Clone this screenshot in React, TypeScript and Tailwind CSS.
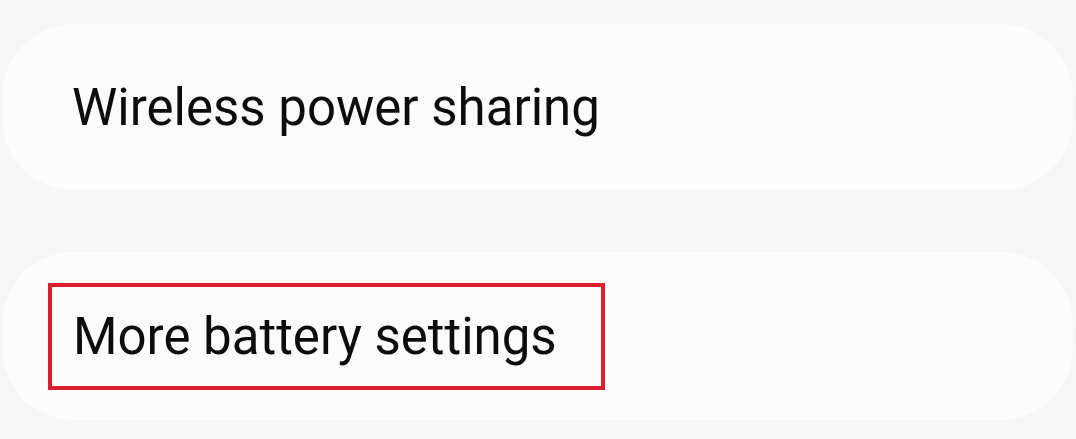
import React from 'react';

export default function App() {
  return (
    <div className="w-[1076px] h-[439px] bg-[#f6f6f6] overflow-hidden flex flex-col pt-[24px] gap-[62px] pl-[2px] pr-[3px]" style={{ fontFamily: 'Roboto, "Noto Sans", sans-serif' }}>
      {/* Wireless power sharing */}
      <div className="h-[166px] bg-[#fcfcfc] rounded-[72px] flex items-center pl-[70px]">
        <span className="text-[51px] leading-none text-[#0c0c0c]">Wireless power sharing</span>
      </div>

      {/* More battery settings, highlighted */}
      <div className="h-[168px] bg-[#fcfcfc] rounded-[72px] flex items-center pl-[46px]">
        <div className="w-[557px] h-[107px] border-[4px] border-[#db1f2d] flex items-center pl-[21px]">
          <span className="text-[51px] leading-none text-[#0c0c0c]">More battery settings</span>
        </div>
      </div>
    </div>
  );
}
